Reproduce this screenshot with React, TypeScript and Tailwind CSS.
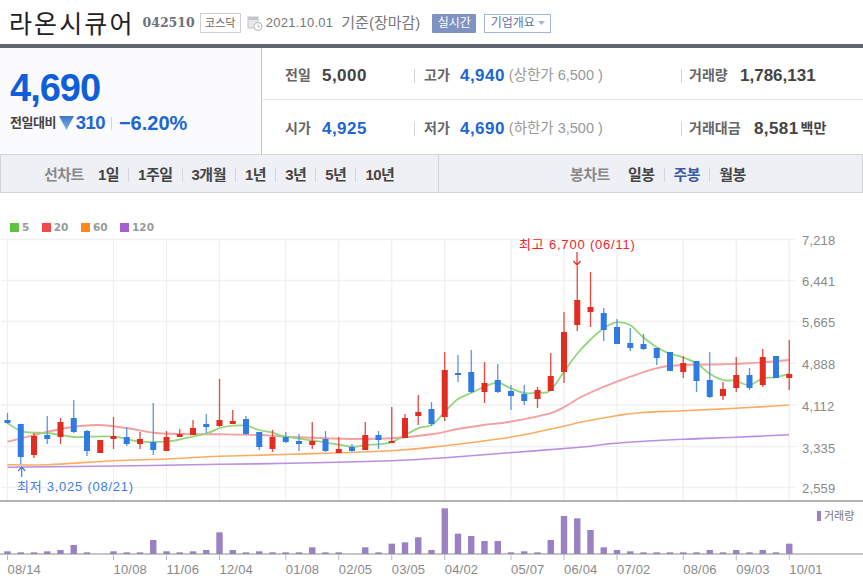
import React from "react";

const X = (n: number) => 7.5 + 13.25 * n;
type C = [string, number, number, number, number];
const candles: C[] = [
  ["b",413,420,423,424],["b",424,424,457,464],["r",433,436,455,458],["b",416,435,439,444],["r",418,422,437,444],
  ["b",400,418,432,433],["b",430,431,451,456],["r",440,440,453,453],["r",417,436,439,449],["b",427,437,444,446],
  ["r",432,439,444,449],["b",403,442,450,455],["r",431,437,451,451],["r",429,434,437,437],["r",420,428,435,435],
  ["b",414,424,427,433],["r",379,420,426,427],["r",410,421,424,424],["b",416,419,434,435],["b",432,432,447,450],
  ["r",430,437,449,452],["b",432,437,442,443],["b",434,441,444,451],["r",422,441,445,449],["b",431,439,451,452],
  ["r",437,449,453,453],["b",444,447,451,452],["r",422,435,450,450],["b",431,435,440,449],["r",407,441,443,443],
  ["r",414,418,438,438],["r",395,412,416,425],["b",402,409,424,426],["r",352,370,417,421],["b",355,373,375,382],
  ["b",350,372,392,393],["r",362,383,392,403],["b",364,380,392,393],["b",385,391,396,410],["b",385,394,401,405],
  ["r",387,390,399,408],["r",353,376,391,391],["r",312,332,372,383],["r",266,300,325,331],["r",272,307,312,327],
  ["b",308,313,330,341],["b",319,327,344,344],["b",328,343,348,351],["b",334,344,349,350],["b",348,348,358,365],
  ["b",352,352,371,371],["r",356,363,372,378],["b",361,361,381,392],["b",352,380,397,398],["r",382,389,396,400],
  ["r",357,375,388,392],["b",368,375,388,390],["r",349,357,385,387],["b",356,356,378,378],["r",340,374,378,390],
];
const volumeTop = [484,487,487,484,480,465,487,492,484,487,487,450,484,487,484,480,427,480,487,484,487,487,487,472,487,487,492,472,487,461,457,442,480,355,431,438,453,453,487,484,487,450,378,385,420,472,480,484,487,487,487,487,487,480,487,480,487,480,487,461];
const green = "7.5,423 23,431.7 47.7,433 74,437 87.7,436.7 114,436.7 140,441.7 166.5,441.7 180,439.3 206.7,433.3 220,428 233,425.7 246.7,425.7 259,430 272.7,432.7 286,436.7 325,442.3 351.7,446.7 365,445 391,442.3 417.7,428.3 431.7,425 445,411.7 457.7,399.3 471.7,392.7 484,387 497.7,382.7 510,388 524,393 537.7,392.7 550,390.7 564,371.7 577,354 590,340 604,328 616.3,322.3 630,325 642.7,336.7 656,346.7 669,353.3 682.7,357.3 696.7,363.3 709,373.3 722.7,380 735,380.7 749,385 762.7,378.3 775,377.3 789,374";
const red = "7.5,441.7 21.7,438.3 47.7,431.7 74,426.7 100,425 127.7,428.3 154,432.7 180,434 220,434.3 259,435 286,436.7 325,438.3 351.7,439 391,438.3 431.7,434.3 457.7,429 484,425 510,421.7 550,413.3 566,406 583,396 616.7,381.7 656,368.3 682.7,365 722.7,364.3 749,363.3 789,360";
const orange = "7.5,464.7 47.7,464.7 114,460.7 166.5,459 220,456.3 290,454.3 391,450.7 445,445.7 510,437.3 565,426 580,422.3 616.3,415.7 640,412.7 683,410.7 735,408.3 789.3,405";
const purple = "7.5,467.3 114,466 220,464.3 290,463.3 391,460.7 445,457.7 510,452.7 580,447.3 616,443.3 683,439.3 735,437.3 789,434.7";
const gridY = [239.5,280.5,321.5,363,405,446.5,487.5];
const axis: [string, number][] = [["7,218",245],["6,441",286],["5,665",327],["4,888",369],["4,112",411],["3,335",453],["2,559",493]];
const dates: [string, number][] = [["08/14",0],["10/08",8],["11/06",12],["12/04",16],["01/08",21],["02/05",25],["03/05",29],["04/02",33],["05/07",38],["06/04",42],["07/02",46],["08/06",51],["09/03",55],["10/01",59]];
const font = { fontFamily: '"Liberation Sans","Noto Sans CJK KR",sans-serif' };

function smooth(pts: string) {
  const p = pts.split(" ").map((s) => s.split(",").map(Number));
  let d = `M${p[0][0]} ${p[0][1]}`;
  for (let i = 0; i < p.length - 1; i++) {
    const a = p[Math.max(i - 1, 0)], b = p[i], c = p[i + 1], e = p[Math.min(i + 2, p.length - 1)];
    d += `C${b[0] + (c[0] - a[0]) / 6} ${b[1] + (c[1] - a[1]) / 6} ${c[0] - (e[0] - b[0]) / 6} ${c[1] - (e[1] - b[1]) / 6} ${c[0]} ${c[1]}`;
  }
  return d;
}

function Chart() {
  return (
    <svg width="863" height="353" viewBox="0 232 863 353" className="block" style={font}>
      {gridY.map((y) => <line key={y} x1="1" x2="796" y1={y} y2={y} stroke="#f1f1f3" strokeWidth="1.4" />)}
      {dates.map(([d, n]) => <line key={d} x1={X(n)} x2={X(n)} y1="239" y2="500" stroke="#efeff1" strokeWidth="1.2" />)}
      <path d={smooth(purple)} fill="none" stroke="#bb8fe0" strokeWidth="1.6" />
      <path d={smooth(orange)} fill="none" stroke="#f9ad62" strokeWidth="1.6" />
      <path d={smooth(red)} fill="none" stroke="#f4a0a0" strokeWidth="1.9" />
      <path d={smooth(green)} fill="none" stroke="#93d67e" strokeWidth="1.8" />
      {candles.map(([c, h, t, b, l], n) => {
        const col = c === "r" ? "#e22c22" : "#2f7be2";
        return (
          <g key={n}>
            <line x1={X(n)} x2={X(n)} y1={h} y2={l} stroke={c === "r" ? "#e8473f" : "#5a94e8"} strokeWidth="1.3" />
            <rect x={X(n) - 3} y={t} width="6" height={Math.max(b - t, 2)} fill={col} />
          </g>
        );
      })}
      <text x="519" y="249" fontSize="13" fill="#f0252b" letterSpacing="0.8">최고 6,700 (06/11)</text>
      <path d="M577 252V265M573.5 261L577 265L580.5 261" fill="none" stroke="#ee2a2a" strokeWidth="1.2" />
      <text x="17" y="491" fontSize="13" fill="#3f80dc" letterSpacing="0.75">최저 3,025 (08/21)</text>
      <path d="M21.7 477V467M18.2 471L21.7 467L25.2 471" fill="none" stroke="#3f80dc" strokeWidth="1.2" />
      {axis.map(([t, y]) => <text key={t} x="802" y={y} fontSize="13" fill="#8a8a8a" letterSpacing="0.15">{t}</text>)}
      <line x1="0" x2="863" y1="501" y2="501" stroke="#999b9e" strokeWidth="1.4" />
      {volumeTop.map((z, n) => {
        const top = 390 + z / 3;
        return z < 492 ? <rect key={n} x={X(n) - 3.2} y={top} width="6.4" height={554 - top} fill="#9a80c4" /> : null;
      })}
      <line x1="0" x2="863" y1="554" y2="554" stroke="#8e8e92" strokeWidth="1.2" />
      {dates.map(([d, n]) => (
        <g key={d}>
          <line x1={X(n)} x2={X(n)} y1="554" y2="560" stroke="#bbb" />
          <text x={X(n)} y="574" fontSize="13" fill="#8a8a8a" letterSpacing="0.2">{d}</text>
        </g>
      ))}
      <rect x="817" y="511" width="4" height="10" fill="#9a80c4" />
      <text x="824" y="520" fontSize="11" fill="#777">거래량</text>
    </svg>
  );
}

function Sep({ h = "h-[14px]" }: { h?: string }) {
  return <span className={`w-px bg-[#d5d6da] ${h}`} />;
}

function Stat({ label, labelW, value, blue, extra, wide }: { label: string; labelW: string; value: string; blue?: boolean; extra?: string; wide?: boolean }) {
  return (
    <div className="flex items-center">
      <span className={`${labelW} text-[14px] font-bold text-[#666]`}>{label}</span>
      <span className={`text-[17px] font-bold ${blue ? "text-[#1e66d0]" : "text-[#444]"} ${wide ? "" : "tracking-[0.45px]"}`}>{value}</span>
      {extra && <span className="ml-[4px] text-[14.5px] text-[#999]">{extra}</span>}
    </div>
  );
}

function Tab({ children, cls = "text-[#444]" }: { children: React.ReactNode; cls?: string }) {
  return <span className={`text-[15px] font-bold tracking-[-0.5px] ${cls}`}>{children}</span>;
}

function Legend({ color, label }: { color: string; label: string }) {
  return (
    <span className="flex items-center gap-[3px]">
      <span className={`h-[9px] w-[9px] ${color}`} />
      <span className="text-[10.5px] font-bold text-[#999]" style={{ fontFamily: '"DejaVu Sans",sans-serif' }}>{label}</span>
    </span>
  );
}

export default function App() {
  return (
    <div className="h-[585px] w-[863px] overflow-hidden bg-white" style={font}>
      <header className="flex h-[44px] items-center pt-[2px] pl-[9px]">
        <h1 className="mb-[2px] text-[25px] leading-none font-normal tracking-[2.1px] text-[#222]" style={{ fontFamily: '"Noto Sans CJK KR",sans-serif' }}>라온시큐어</h1>
        <span className="ml-[8px] text-[12.5px] font-bold text-[#6d717c]" style={{ fontFamily: '"DejaVu Serif",serif' }}>042510</span>
        <span className="ml-[5px] flex h-[20px] w-[41px] items-center justify-center border border-[#d0d0d0] text-[11px] text-[#666]">코스닥</span>
        <svg width="16" height="16" viewBox="0 0 16 16" className="ml-[6px]">
          <rect x="1" y="2" width="10" height="11" fill="#e8e8ea" stroke="#c2c4c8" />
          <rect x="1" y="2" width="10" height="3" fill="#c2c4c8" />
          <circle cx="11" cy="11.5" r="4" fill="#fff" stroke="#b5b7bb" />
          <path d="M11 9.5V11.7H13" fill="none" stroke="#b5b7bb" />
        </svg>
        <span className="ml-[3px] text-[13px] tracking-[0.25px] text-[#777]">2021.10.01</span>
        <span className="ml-[8px] text-[15px] text-[#777]">기준(장마감)</span>
        <span className="ml-[12px] flex h-[19px] w-[44px] items-center justify-center rounded-[1px] bg-[#7f92c4] text-[12px] text-white">실시간</span>
        <span className="ml-[8px] flex h-[19px] w-[67px] items-center justify-center gap-[3px] border border-[#a6b4d8] text-[12px] text-[#5e72a8]">
          기업개요
          <svg width="7" height="4" viewBox="0 0 7 4"><path d="M0 0H7L3.5 4Z" fill="#a6b4d8" /></svg>
        </span>
      </header>
      <div className="h-[4px] bg-[#5f6670]" />
      <section className="flex h-[106px]">
        <div className="w-[262px] border-r border-[#c4c5c9] bg-[#fbfbfd] pt-[17px] pl-[10px]">
          <div className="text-[38px] leading-[46px] font-bold tracking-[-1px] text-[#0e5fd8]">4,690</div>
          <div className="-mt-[3px] flex items-center">
            <span className="text-[13px] font-bold tracking-[-0.5px] text-[#444]">전일대비</span>
            <svg width="16" height="14" viewBox="0 0 16 14" className="ml-[3px]">
              <defs><linearGradient id="tri" x1="0" x2="0" y1="0" y2="1"><stop offset="0" stopColor="#3d78c8" /><stop offset="1" stopColor="#7fb0e8" /></linearGradient></defs>
              <path d="M0 0H15L7.5 14Z" fill="url(#tri)" />
            </svg>
            <span className="ml-[1px] text-[18.5px] font-bold tracking-[-0.6px] text-[#1e66d0]">310</span>
            <span className="mx-[6px] h-[13px] w-px bg-[#d5d6da]" />
            <span className="ml-[1px] text-[20px] font-bold text-[#1e66d0]">−6.20%</span>
          </div>
        </div>
        <div className="flex flex-1 flex-col">
          <div className="grid h-[52px] grid-cols-[129px_267px_182px] items-center border-b border-[#e8e8ea] pt-[4px] pl-[23px]">
            <Stat label="전일" labelW="w-[37px]" value="5,000" />
            <div className="flex items-center gap-[9px]"><Sep /><Stat label="고가" labelW="w-[36px]" value="4,940" blue extra="(상한가 6,500 )" /></div>
            <div className="flex items-center gap-[7px]"><Sep /><Stat label="거래량" labelW="w-[51px]" value="1,786,131" wide /></div>
          </div>
          <div className="grid h-[53px] grid-cols-[129px_267px_182px] items-center pt-[4px] pl-[23px]">
            <Stat label="시가" labelW="w-[37px]" value="4,925" blue />
            <div className="flex items-center gap-[9px]"><Sep /><Stat label="저가" labelW="w-[36px]" value="4,690" blue extra="(하한가 3,500 )" /></div>
            <div className="flex items-center gap-[7px]"><Sep />
              <div className="flex items-center">
                <span className="w-[65px] text-[14px] font-bold text-[#666]">거래대금</span>
                <span className="text-[17px] font-bold tracking-[0.4px] text-[#444]">8,581</span>
                <span className="ml-[2px] text-[14px] font-bold text-[#444]">백만</span>
              </div>
            </div>
          </div>
        </div>
      </section>
      <nav className="flex h-[39px] border border-[#d3d4d8] bg-[#eff0f5] pt-[3px]">
        <div className="-mt-[3px] flex w-[438px] items-center gap-[9px] border-r border-[#d3d4d8] pt-[3px] pl-[43px]">
          <Tab cls="text-[#888] mr-[5px]">선차트</Tab>
          <Tab>1일</Tab><Sep /><Tab>1주일</Tab><Sep /><Tab>3개월</Tab><Sep /><Tab>1년</Tab><Sep /><Tab>3년</Tab><Sep /><Tab>5년</Tab><Sep /><Tab>10년</Tab>
        </div>
        <div className="flex flex-1 items-center gap-[9px] pl-[131px]">
          <Tab cls="text-[#888] mr-[9px]">봉차트</Tab>
          <Tab>일봉</Tab><Sep /><Tab cls="text-[#3a5aa8]">주봉</Tab><Sep /><Tab>월봉</Tab>
        </div>
      </nav>
      <div className="flex h-[39px] items-start gap-[12.5px] pt-[27px] pl-[10px]">
        <Legend color="bg-[#5fc240]" label="5" />
        <Legend color="bg-[#f04a4a]" label="20" />
        <Legend color="bg-[#fb8a1a]" label="60" />
        <Legend color="bg-[#a45fd0]" label="120" />
      </div>
      <Chart />
    </div>
  );
}
